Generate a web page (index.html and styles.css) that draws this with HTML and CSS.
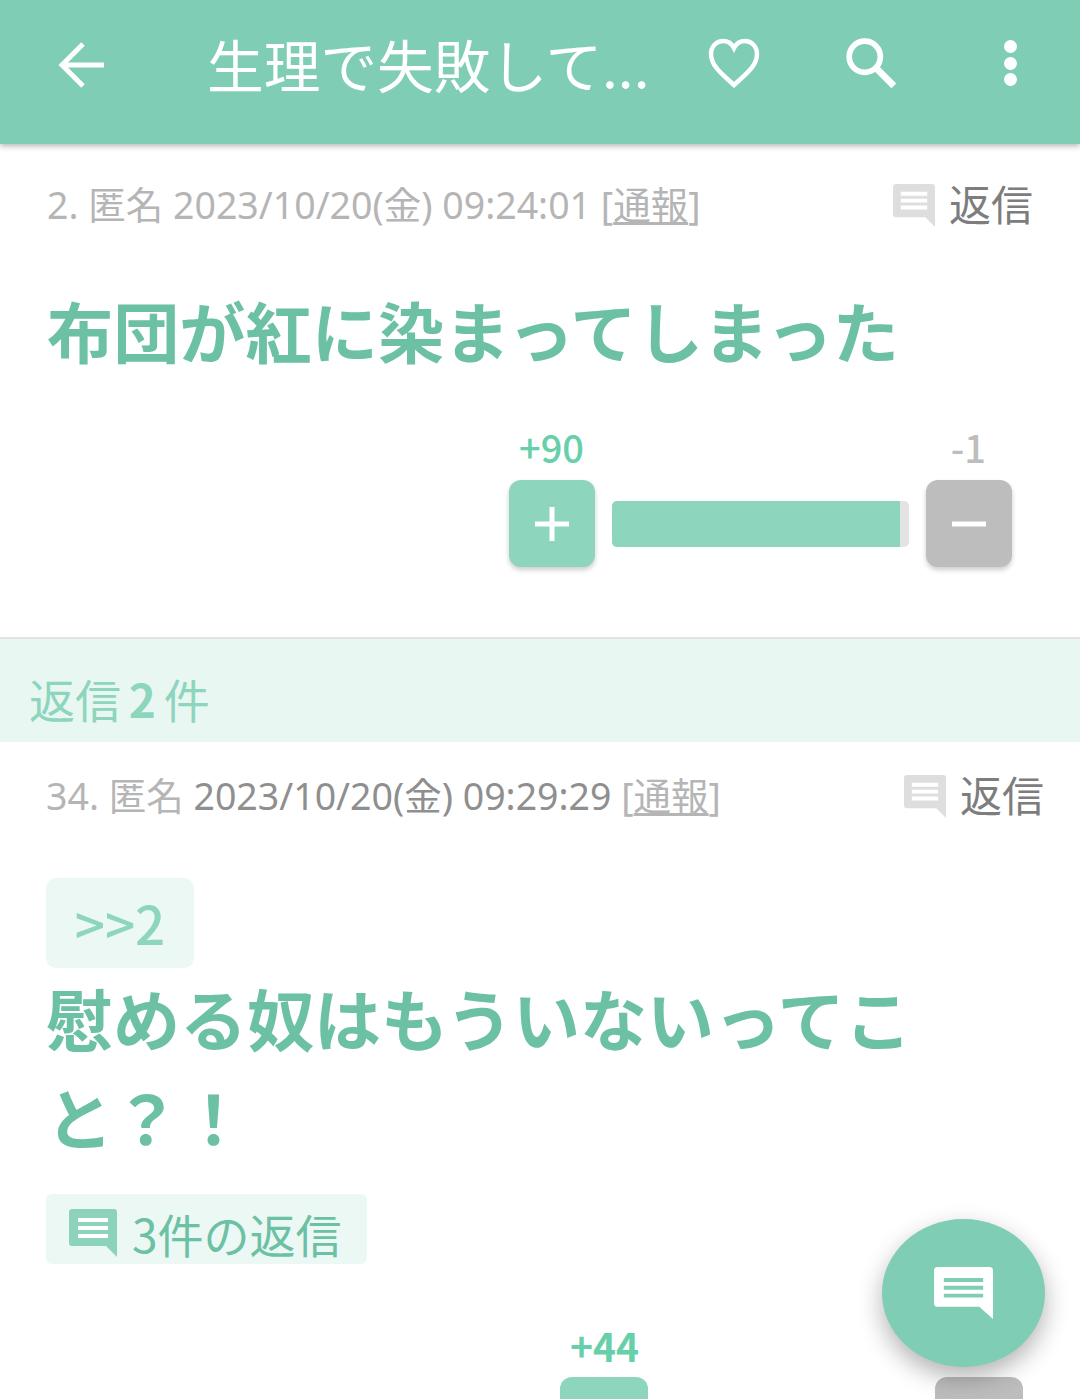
FILE: index.html
```html
<!DOCTYPE html>
<html lang="ja">
<head>
<meta charset="utf-8">
<title>生理で失敗して...</title>
<link rel="stylesheet" href="styles.css">
</head>
<body>
<div class="screen">
  <header class="appbar">
    <svg class="ico back" viewBox="0 0 48 48"><path d="M47 24H6M26 3 5 24l21 21" fill="none" stroke="#fff" stroke-width="5"/></svg>
    <h1 class="appbar-title">生理で失敗して...</h1>
    <svg class="ico heart" viewBox="0 0 52 52"><path d="M26 47 C14 36 3 28 3 16 C3 8 9 3 15 3 C20 3 24 6 26 10 C28 6 32 3 37 3 C43 3 49 8 49 16 C49 28 38 36 26 47Z" fill="none" stroke="#fff" stroke-width="4.5"/></svg>
    <svg class="ico search" viewBox="0 0 52 52"><circle cx="20" cy="20" r="15" fill="none" stroke="#fff" stroke-width="5.5"/><path d="M31 31 48 48" stroke="#fff" stroke-width="6.5"/></svg>
    <div class="kebab"><i></i><i></i><i></i></div>
  </header>

  <article class="post first">
    <div class="meta">
      <span class="meta-text">2. 匿名 2023/10/20(金) 09:24:01 [<u>通報</u>]</span>
      <span class="reply"><svg class="bubble" viewBox="0 0 44 44"><path d="M2 0H40a3 3 0 0 1 3 3V44L33 34H3a3 3 0 0 1-3-3V3a3 3 0 0 1 3-3Z" fill="#dedede"/><path d="M8 10H35M8 17H35M8 24H35" stroke="#fff" stroke-width="4"/></svg><span>返信</span></span>
    </div>
    <p class="body">布団が紅に染まってしまった</p>
    <div class="votes">
      <div class="counts"><span class="up">+90</span><span class="down">-1</span></div>
      <div class="vote-row">
        <button class="vbtn plus"><svg viewBox="0 0 34 34"><path d="M17 0V34M0 17H34" stroke="#fff" stroke-width="5"/></svg></button>
        <div class="meter"><div class="fill" style="width:97%"></div></div>
        <button class="vbtn minus"><svg viewBox="0 0 34 34"><path d="M0 17H34" stroke="#fff" stroke-width="5"/></svg></button>
      </div>
    </div>
  </article>

  <div class="section-head">返信 <b>2</b> 件</div>

  <article class="post second">
    <div class="meta">
      <span class="meta-text">34. 匿名 <em>2023/10/20(金) 09:29:29</em> [<u>通報</u>]</span>
      <span class="reply"><svg class="bubble" viewBox="0 0 44 44"><path d="M2 0H40a3 3 0 0 1 3 3V44L33 34H3a3 3 0 0 1-3-3V3a3 3 0 0 1 3-3Z" fill="#dedede"/><path d="M8 10H35M8 17H35M8 24H35" stroke="#fff" stroke-width="4"/></svg><span>返信</span></span>
    </div>
    <div class="anchor">&gt;&gt;2</div>
    <p class="body wrap">慰める奴はもういないってこと？！</p>
    <div class="replies"><svg class="bubble" viewBox="0 0 48 48"><path d="M3 0H45a3 3 0 0 1 3 3V48L37 37H3a3 3 0 0 1-3-3V3a3 3 0 0 1 3-3Z" fill="#8dd3bb"/><path d="M9 11H39M9 19H39M9 27H39" stroke="#fff" stroke-width="4"/></svg><span>3件の返信</span></div>
    <div class="votes compact">
      <span class="up">+44</span>
      <div class="vote-row-2"><div class="stub green"></div><div class="stub grey"></div></div>
    </div>
  </article>

  <button class="fab"><svg viewBox="0 0 60 60" preserveAspectRatio="none"><path d="M4 0H56a4 4 0 0 1 4 4V60L46 46H4a4 4 0 0 1-4-4V4a4 4 0 0 1 4-4Z" fill="#fff"/><path d="M10 15H50M10 24H50M10 33H50" stroke="#7fcdb4" stroke-width="4.5"/></svg></button>
</div>
</body>
</html>
```
FILE: styles.css
```css
* { box-sizing: border-box; }
html, body { margin: 0; padding: 0; }
body {
  background: #fff;
  font-family: "Noto Sans CJK JP", "Noto Sans", sans-serif;
}
.screen {
  position: relative;
  width: 1080px;
  height: 1399px;
  overflow: hidden;
}

/* top bar */
.appbar {
  height: 144px;
  background: #7fcdb4;
  box-shadow: 0 2px 6px rgba(0, 0, 0, .3);
  position: relative;
  z-index: 2;
  display: flex;
  align-items: center;
  padding: 0 0 14px 57px;
  color: #fff;
}
.ico { display: block; flex: none; }
.back { width: 48px; height: 48px; }
.appbar-title {
  margin: 0 0 4px 102px;
  width: 450px;
  font-size: 56.7px;
  font-weight: 400;
  line-height: 1;
  white-space: nowrap;
}
.heart { width: 52px; height: 52px; margin: 0 0 3px 51px; }
.search { width: 54px; height: 54px; margin: 0 0 4px 84px; }
.kebab {
  margin: 0 0 4px 106px;
  display: flex;
  flex-direction: column;
  gap: 3.5px;
}
.kebab i {
  display: block;
  width: 13px;
  height: 13px;
  border-radius: 50%;
  background: #fff;
}

/* posts */
.post { display: block; }
.first { height: 493px; padding: 28px 47px 0; }
.second { padding: 21px 36px 0 46px; }
.meta {
  display: flex;
  justify-content: space-between;
  align-items: center;
  height: 60px;
}
.meta-text {
  font-family: "Noto Sans", "Noto Sans CJK JP", sans-serif;
  font-size: 37.5px;
  color: #b5b5b5;
  white-space: nowrap;
}
.meta-text em { font-style: normal; color: #8f8f8f; }
.meta-text u { text-underline-offset: 3px; }
.reply {
  display: flex;
  align-items: center;
  gap: 13px;
  font-size: 42px;
  color: #7d7d7d;
}
.bubble { width: 43px; height: 43px; flex: none; margin-top: 6px; }
.body {
  margin: 0;
  font-size: 66.2px;
  font-weight: 700;
  line-height: 99px;
  color: #6cc1a5;
}
.first .body { margin-top: 48px; }
.wrap { width: 880px; font-size: 67px; }

/* vote widgets */
.votes { margin-left: 462px; width: 503px; margin-top: 47px; }
.counts {
  display: flex;
  justify-content: space-between;
  height: 38px;
  overflow: hidden;
  padding: 0 26px 0 10px;
  font-size: 38px;
  line-height: 42px;
}
.up { color: #67cfa9; font-weight: 500; }
.down { color: #bdbdbd; font-weight: 500; }
.vote-row {
  display: flex;
  align-items: center;
  gap: 17px;
  margin-top: 16px;
}
.vbtn {
  width: 86px;
  height: 87px;
  padding: 0;
  border: 0;
  border-radius: 12px;
  box-shadow: 0 3px 5px rgba(0, 0, 0, .2);
  display: flex;
  align-items: center;
  justify-content: center;
  flex: none;
}
.vbtn svg { width: 34px; height: 34px; display: block; }
.plus { background: #8dd5bc; }
.minus { background: #bdbdbd; }
.meter {
  flex: 1;
  height: 46px;
  background: #e3e3e3;
  border-radius: 5px;
  overflow: hidden;
}
.fill { height: 100%; background: #8dd5bc; }

/* reply count band */
.section-head {
  height: 105px;
  border-top: 2px solid #e3e3e3;
  background: #e9f7f3;
  color: #8dd5bc;
  font-size: 46px;
  line-height: 118px;
  padding-left: 29px;
  word-spacing: -2.5px;
}
.section-head b { font-weight: 700; }

/* second post */
.anchor {
  margin-top: 55px;
  width: 148px;
  height: 90px;
  background: #ecf8f4;
  border-radius: 10px;
  color: #8dd5bc;
  font-size: 53px;
  font-weight: 500;
  line-height: 88px;
  text-align: center;
}
.second .body { margin-top: -1px; }
.replies {
  margin-top: 29px;
  width: 321px;
  height: 70px;
  background: #ecf8f4;
  border-radius: 6px;
  display: flex;
  align-items: center;
  gap: 15px;
  padding: 8px 0 0 23px;
  color: #6cc1a5;
  font-size: 46px;
  white-space: nowrap;
}
.replies .bubble { width: 48px; height: 48px; margin-top: 0; }
.compact { margin: 60px 0 0; width: auto; }
.compact .up { display: block; margin-left: 524px; font-size: 39px; font-weight: 600; line-height: 42px; }
.vote-row-2 { display: flex; margin: 11px 0 0 514px; gap: 287px; }
.stub { width: 88px; height: 60px; border-radius: 12px; }
.green { background: #8dd5bc; }
.grey { background: #bdbdbd; }

/* floating compose button */
.fab {
  position: absolute;
  left: 882px;
  top: 1219px;
  width: 163px;
  height: 148px;
  padding: 0;
  border: 0;
  border-radius: 50%;
  background: #7fcdb4;
  box-shadow: 0 10px 24px rgba(0, 0, 0, .3);
  display: flex;
  align-items: center;
  justify-content: center;
}
.fab svg { width: 59px; height: 52px; display: block; }
```
